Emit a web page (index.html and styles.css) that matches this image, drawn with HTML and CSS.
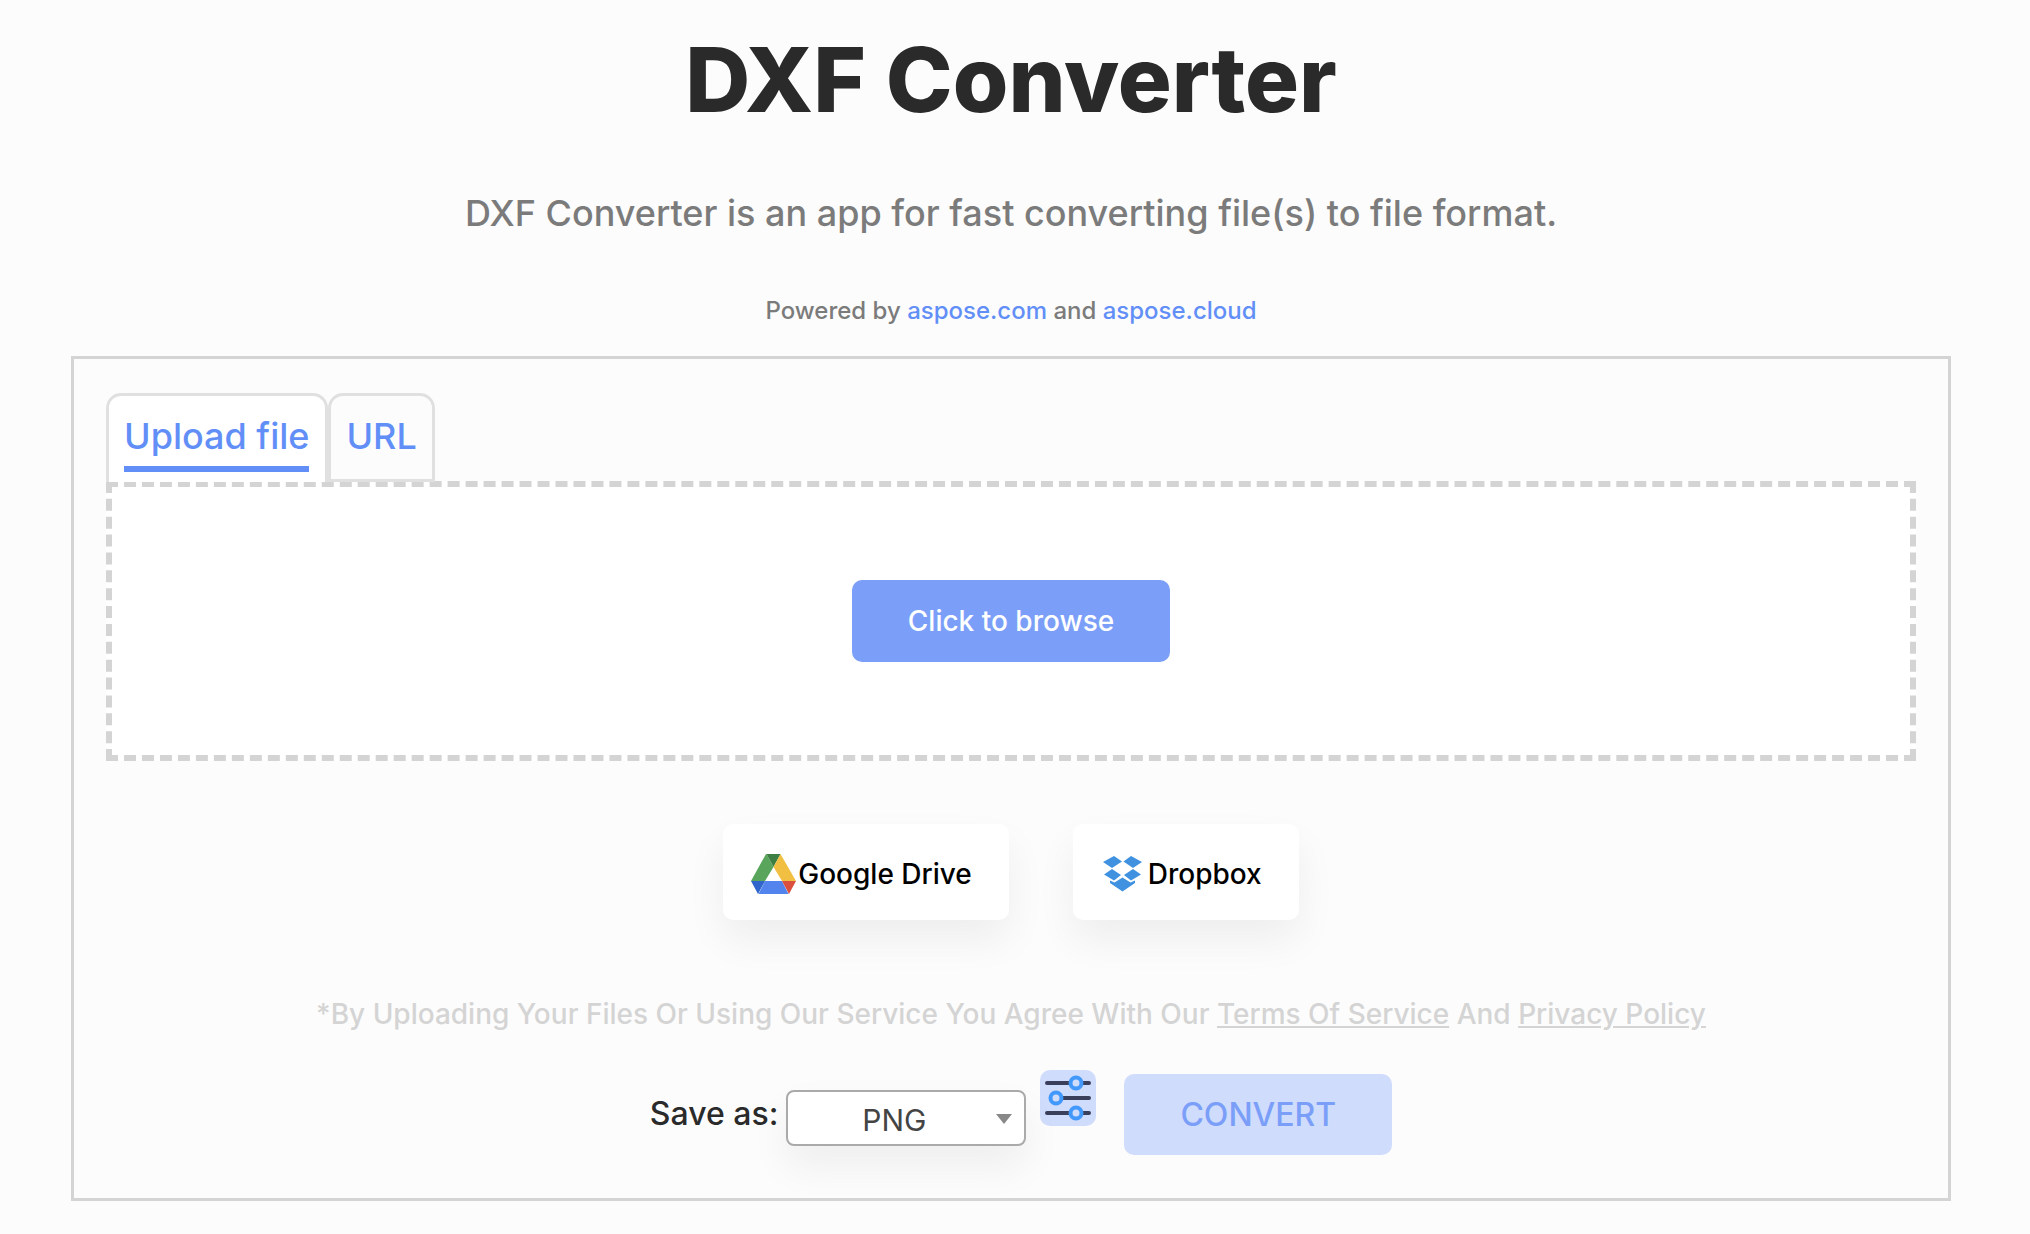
FILE: index.html
```html
<!DOCTYPE html>
<html lang="en">
<head>
    <meta charset="UTF-8">
    <meta name="viewport" content="width=device-width, initial-scale=1.0">
    <title>DXF Converter</title>
    <link rel="stylesheet" href="styles.css">
</head>
<body>
    <header class="header">
        <h1 class="title">DXF Converter</h1>
        <p class="subtitle">DXF Converter is an app for fast converting file(s) to file format.</p>
        <p class="powered">Powered by <a href="#">aspose.com</a> and <a href="#">aspose.cloud</a></p>
    </header>

    <main class="panel">
        <div class="tabs">
            <button type="button" class="tab active"><span class="tab-label">Upload file</span></button>
            <button type="button" class="tab"><span class="tab-label">URL</span></button>
        </div>

        <div class="dropzone">
            <button type="button" class="browse-btn">Click to browse</button>
        </div>

        <div class="clouds">
            <button type="button" class="cloud-btn drive">
                <svg width="45" height="40" viewBox="0 0 90 80">
                    <path fill="#59a55c" d="M30 0 L0 54 L28 54 L45 26 L31 0Z"/>
                    <path fill="#3d7f42" d="M31 0 H59 L45 26Z"/>
                    <path fill="#f1bf42" d="M59 0 L90 54 H62 L45 26Z"/>
                    <path fill="#5383ec" d="M28 54 H62 L75 80 H15Z"/>
                    <path fill="#3065cb" d="M0 54 H28 L14 80Z"/>
                    <path fill="#d9503f" d="M62 54 H90 L76 80Z"/>
                </svg>
                Google Drive
            </button>
            <button type="button" class="cloud-btn dropbox">
                <svg width="39" height="36" viewBox="0 0 78 72">
                    <g fill="#4091e0">
                        <path d="M22 0 L38 11 L18 24 L0 12Z"/>
                        <path d="M56 0 L78 12 L60 24 L41 11Z"/>
                        <path d="M18 26 L36 38 L22 49 L2 37Z"/>
                        <path d="M60 26 L76 37 L56 49 L42 38Z"/>
                        <path d="M39 43 L55 53 L64 49 V54 L39 71 L14 54 V49 L23 53Z"/>
                    </g>
                </svg>
                Dropbox
            </button>
        </div>

        <p class="terms">*By Uploading Your Files Or Using Our Service You Agree With Our <a href="#">Terms Of Service</a> And <a href="#">Privacy Policy</a></p>

        <form class="save-row">
            <label for="format">Save as:</label>
            <div class="select-wrap">
                <select id="format">
                    <option>PNG</option>
                    <option>JPG</option>
                    <option>PDF</option>
                    <option>SVG</option>
                </select>
            </div>
            <button type="button" class="options-btn" aria-label="Options">
                <svg width="46" height="46" viewBox="0 0 46 46" fill="none">
                    <path d="M2 8H44M10 23H44M2 38H44" stroke="#3a3f5c" stroke-width="4" stroke-linecap="round"/>
                    <g fill="#cfdcfc" stroke="#4298fb" stroke-width="4">
                        <circle cx="31" cy="8" r="5.5"/>
                        <circle cx="11" cy="23" r="5.5"/>
                        <circle cx="31" cy="38" r="5.5"/>
                    </g>
                </svg>
            </button>
            <button type="button" class="convert-btn" disabled>CONVERT</button>
        </form>
    </main>
</body>
</html>
```
FILE: styles.css
```css
* {
    box-sizing: border-box;
}
body {
    margin: 0;
    padding-right: 8px;
    background-color: #fcfcfc;
    color: #2a2a2a;
    font-family: Inter, sans-serif;
    font-weight: 500;
}
button, select {
    font-family: inherit;
    font-weight: inherit;
    cursor: pointer;
}
a {
    color: #628ff7;
    text-decoration: none;
}

/* Header */
.header {
    text-align: center;
}
.title {
    margin: 0;
    padding-top: 26px;
    font-size: 90px;
    font-weight: 800;
    line-height: 108px;
}
.subtitle {
    margin: 52px 0 0;
    font-size: 36px;
    line-height: 54px;
    color: #7b7b7b;
}
.powered {
    margin: 53px 0 0;
    font-size: 24px;
    line-height: 36px;
    color: #7b7b7b;
}

/* Main box */
.panel {
    margin: 27px 71px 32px;
    padding: 34px 32px 43px;
    border: 3px solid #d4d4d4;
}
.tabs {
    display: flex;
    position: relative;
}
.tab {
    height: 89px;
    padding: 14px 15px;
    border: 3px solid #e0e0e0;
    border-radius: 15px 15px 0 0;
    background-color: #fcfcfc;
    color: #628ff7;
    font-size: 36px;
    line-height: 48px;
}
.tab-label {
    display: block;
    height: 62px;
    padding-top: 2px;
}
.tab.active {
    padding-right: 16px;
    border-bottom: none;
    background-color: white;
}
.tab.active .tab-label {
    border-bottom: 6px solid #628ff7;
}
.dropzone {
    display: flex;
    justify-content: center;
    align-items: center;
    height: 280px;
    margin-top: -1px;
    border: 6px dashed #d4d4d4;
    background-color: white;
}
.browse-btn {
    padding: 20px 56px;
    border: none;
    border-radius: 10px;
    background-color: #7b9ff8;
    color: white;
    font-size: 28px;
    line-height: 42px;
}

/* Cloud storage */
.clouds {
    display: flex;
    justify-content: center;
    gap: 64px;
    margin-top: 63px;
}
.cloud-btn {
    display: flex;
    align-items: center;
    height: 96px;
    border: none;
    border-radius: 10px;
    background-color: white;
    box-shadow: 0 20px 40px rgba(0, 0, 0, 0.06);
    color: black;
    font-size: 28px;
}
.drive {
    gap: 2px;
    padding: 4px 37px 0 28px;
}
.dropbox {
    gap: 6px;
    padding: 4px 37px 0 30px;
}
.terms {
    margin: 73px 0 0;
    text-align: center;
    color: #d4d4d4;
    font-size: 28px;
    line-height: 42px;
}
.terms a {
    color: inherit;
    text-decoration: underline;
}

/* Save row */
.save-row {
    display: flex;
    justify-content: center;
    align-items: flex-start;
    margin-top: 35px;
}
.save-row label {
    margin: 20px 8px 0 20px;
    font-size: 32px;
    line-height: 48px;
}
.select-wrap {
    position: relative;
    margin-top: 20px;
}
.select-wrap::after {
    content: "";
    position: absolute;
    top: 24px;
    right: 14px;
    border: 8px solid transparent;
    border-top: 10px solid #888;
    border-bottom: none;
    pointer-events: none;
}
select {
    display: block;
    width: 240px;
    height: 56px;
    padding: 4px 24px 0 0;
    appearance: none;
    border: 2px solid #aaa;
    border-radius: 8px;
    background-color: white;
    box-shadow: 0 20px 40px rgba(0, 0, 0, 0.06);
    color: #444;
    font-size: 30px;
    font-weight: 400;
    text-align: center;
    text-align-last: center;
}
.options-btn {
    display: flex;
    justify-content: center;
    align-items: center;
    width: 56px;
    height: 56px;
    margin: 0 28px 0 14px;
    padding: 0;
    border: none;
    border-radius: 10px;
    background-color: #cfdcfc;
}
.convert-btn {
    margin-top: 4px;
    padding: 17px 56px;
    border: none;
    border-radius: 10px;
    background-color: #cfdcfc;
    color: #7b9ff8;
    font-size: 32px;
    line-height: 47px;
}
```
